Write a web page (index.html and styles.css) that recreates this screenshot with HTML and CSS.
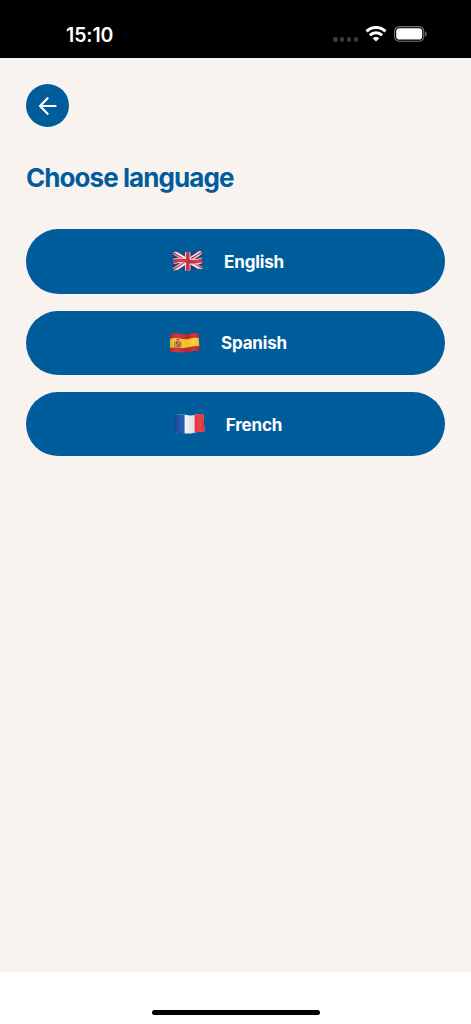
FILE: index.html
```
<!DOCTYPE html>
<html lang="en">
<head>
  <meta charset="UTF-8" />
  <meta name="viewport" content="width=device-width, initial-scale=1.0" />
  <title>Choose language</title>
  <link rel="stylesheet" href="styles.css">
</head>
<body>

<!-- Status bar -->
<div class="status-bar">
  <span class="time">15:10</span>
  <div class="status-icons">
    <span class="signal"><i></i><i></i><i></i><i></i></span>
    <svg class="wifi" width="22" height="16" viewBox="0 0 22 16" fill="none" stroke="#fff" stroke-width="3">
      <path d="M1.500 5.400a13.600 13.600 0 0 1 19 0" />
      <path d="M4.900 9.200a8.700 8.700 0 0 1 12.200 0" />
      <path d="M11 15.600L7.700 12.300a4.700 4.700 0 0 1 6.600 0z" fill="#fff" stroke="none" />
    </svg>
    <svg class="battery" width="33" height="16" viewBox="0 0 33 16">
      <rect x="0.6" y="0.6" width="29.2" height="14.6" rx="4.8" fill="none" stroke="#777" stroke-width="1.1" />
      <rect x="2.2" y="2.2" width="26" height="11.4" rx="3.4" fill="#fff" />
      <path d="M31.200 5.500c2 .8 2 4 0 4.800z" fill="#777" />
    </svg>
  </div>
</div>

<main class="screen">
  <button class="back" aria-label="Back">
    <svg width="20" height="20" viewBox="0 0 20 20" fill="none" stroke="#fff" stroke-width="2.2" stroke-linecap="round" stroke-linejoin="round">
      <path d="M17.600 10H2M9.600 2.200L2 10l7.600 7.800" />
    </svg>
  </button>

  <h1>Choose language</h1>

  <div class="languages">
    <button class="language">
      <svg class="flag" width="30" height="22" viewBox="0 0 30 22">
        <defs>
          <clipPath id="wave"><path d="M0 3Q0 2 1 2C8-.3 12 3.400 18 2.200C23 1.200 26 .5 28.500 1.500L29.500 18.300Q29.500 19.400 28.500 19.200C23 17.800 20 20 16 20.400C10 21 6 19.200 1 20.500Q0 20.800 0 19.500z" /></clipPath>
          <linearGradient id="shade">
            <stop offset="0" stop-color="#000" stop-opacity=".16" />
            <stop offset=".25" stop-color="#fff" stop-opacity=".08" />
            <stop offset=".6" stop-color="#000" stop-opacity=".08" />
            <stop offset=".8" stop-color="#fff" stop-opacity=".06" />
            <stop offset="1" stop-color="#000" stop-opacity=".15" />
          </linearGradient>
        </defs>
        <g clip-path="url(#wave)">
          <path fill="#21377f" d="M0 0h30v22H0z" />
          <path stroke="#f1f0f2" stroke-width="4" d="M0 2l30 17.500M0 20.500L30 1" />
          <path stroke="#d92f42" stroke-width="1.4" d="M0 2.600l12 7M18 11.600l12 7M0 19.800l12-7.800M18 8.800L30 1.400" />
          <path stroke="#f5f2f3" stroke-width="5.4" d="M14.800 0v22M0 11.500Q7 9.500 15 11.200T30 10" fill="none" />
          <path stroke="#de2c42" stroke-width="3.6" d="M14.800 0v22M0 11.500Q7 9.500 15 11.200T30 10" fill="none" />
          <path fill="url(#shade)" d="M0 0h30v22H0z" />
        </g>
      </svg>
      <span>English</span>
    </button>

    <button class="language">
      <svg class="flag" width="30" height="22" viewBox="0 0 30 22">
        <g clip-path="url(#wave)">
          <path fill="#cc2832" d="M0 0h30v22H0z" />
          <path fill="#ffce29" d="M0 6.800C8 4.200 12 8.200 18 7S26 5.400 30 6.200v8.400c-6-1.400-9 .6-14 1.200S6 14.700 0 16z" />
          <path fill="#a5644a" d="M4.200 9.400h1.200v6H4.200zM10.200 9.600h1.200v6h-1.200z" />
          <path fill="#a83b36" d="M5.900 9.200h3.900v4.200q0 2-1.950 2.200q-1.950-.2-1.950-2.200zM6.300 7.300q1.500-1 3 0l-.3 1.300H6.600z" />
          <path fill="#c9a268" d="M7.900 10h1.400v1.700H7.900zM6.300 12.200h1.500v1.700H6.300z" />
          <path fill="url(#shade)" d="M0 0h30v22H0z" />
        </g>
      </svg>
      <span>Spanish</span>
    </button>

    <button class="language">
      <svg class="flag" width="30" height="22" viewBox="0 0 30 22">
        <g clip-path="url(#wave)">
          <path fill="#f6f5f7" d="M0 0h30v22H0z" />
          <path fill="#174fac" d="M0 0h9.600v22H0z" />
          <path fill="#e9343e" d="M19.600 0H30v22H19.600z" />
          <path fill="url(#shade)" d="M0 0h30v22H0z" />
        </g>
      </svg>
      <span>French</span>
    </button>
  </div>
</main>

<footer class="home-area"><div class="home-indicator"></div></footer>

</body>
</html>
```
FILE: styles.css
```
*, *::before, *::after { box-sizing: border-box; margin: 0; padding: 0; }

:root {
  --blue: #005d9c;
  --cream: #f8f3ef;
  --white: #ffffff;
}

body {
  font-family: Inter, sans-serif;
  background: var(--white);
  min-height: 100vh;
  display: flex;
  flex-direction: column;
}

svg { display: block; }

.status-bar {
  height: 58px;
  background: #000;
  color: var(--white);
  display: flex;
  justify-content: space-between;
  align-items: flex-start;
  padding: 22px 44px 0 66px;
}

.time {
  font-size: 19.5px;
  font-weight: 600;
  line-height: 26px;
  letter-spacing: -.1px;
}

.status-icons {
  display: flex;
  align-items: center;
  padding-top: 4px;
}

.signal {
  display: flex;
  gap: 2.4px;
  margin: 11px 7px 0 0;
}

.signal i {
  width: 4.4px;
  height: 4.4px;
  border-radius: 50%;
  background: #3c3c3c;
}

.wifi { margin-right: 7px; }

.screen {
  flex: 1;
  background: var(--cream);
  padding: 26px 26px 0;
}

.back {
  width: 43px;
  height: 43px;
  border: none;
  border-radius: 50%;
  background: var(--blue);
  display: flex;
  align-items: center;
  justify-content: center;
}

h1 {
  font-size: 26px;
  font-weight: 700;
  line-height: 34px;
  letter-spacing: -.93px;
  color: var(--blue);
  margin: 34px 0 34.4px;
}

.languages {
  display: flex;
  flex-direction: column;
  gap: 17.2px;
}

.language {
  height: 64.2px;
  border: none;
  border-radius: 33px;
  background: var(--blue);
  color: var(--white);
  font-family: inherit;
  font-size: 17px;
  font-weight: 700;
  letter-spacing: -.15px;
  display: flex;
  align-items: center;
  justify-content: center;
  gap: 21px;
  padding: 1px 14px 0 0;
}

.flag { margin-top: -1px; }

.home-area {
  height: 52px;
  padding-top: 37.5px;
}

.home-indicator {
  width: 168px;
  height: 5.6px;
  margin: 0 auto;
  border-radius: 3px;
  background: #000;
}
```
